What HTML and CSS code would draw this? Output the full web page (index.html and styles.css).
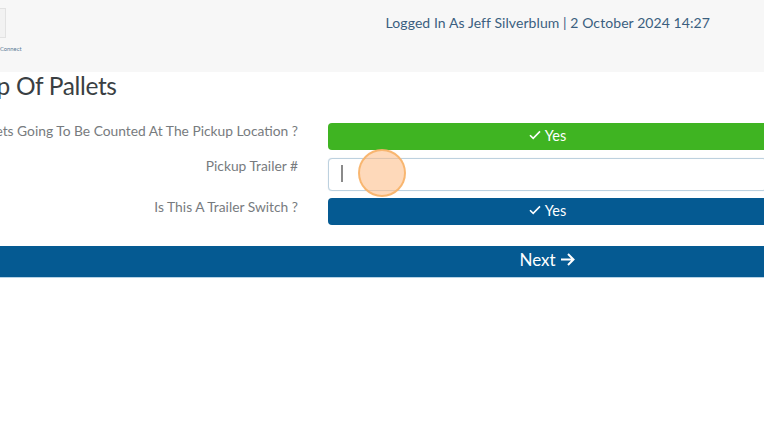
FILE: index.html
```html
<!DOCTYPE html>
<html lang="en">
<head>
    <meta charset="UTF-8">
    <meta name="viewport" content="width=device-width, initial-scale=1.0">
    <title>Pickup Of Pallets</title>
    <link rel="stylesheet" href="styles.css">
</head>
<body>
    <header class="top-bar">
        <div class="brand">
            <div class="brand-box"></div>
            <span class="brand-name">Connect</span>
        </div>
        <div class="login-info">Logged In As Jeff Silverblum | 2 October 2024 14:27</div>
    </header>

    <h1 class="page-title">Pickup Of Pallets</h1>

    <div class="form-rows">
        <div class="form-row row-counted">
            <label class="row-label">Are The Pallets Going To Be Counted At The Pickup Location ?</label>
            <button class="toggle toggle-green">
                <svg class="check" viewBox="0 0 12 10"><path d="M1 5.2 4.2 8.4 11 1.4"/></svg>
                Yes
            </button>
        </div>
        <div class="form-row row-trailer">
            <label class="row-label">Pickup Trailer #</label>
            <div class="text-input"><span class="caret"></span></div>
        </div>
        <div class="form-row row-switch">
            <label class="row-label">Is This A Trailer Switch ?</label>
            <button class="toggle toggle-blue">
                <svg class="check" viewBox="0 0 12 10"><path d="M1 5.2 4.2 8.4 11 1.4"/></svg>
                Yes
            </button>
        </div>
    </div>

    <button class="next-btn">
        Next
        <svg class="arrow" viewBox="0 0 15 13"><path d="M1 6.5H13.5M8 1l5.5 5.5L8 12"/></svg>
    </button>

    <div class="click-marker"></div>
</body>
</html>
```

FILE: styles.css
```css
* {
    padding: 0;
    margin: 0;
    box-sizing: border-box;
}

html, body {
    width: 764px;
    height: 426px;
    overflow: hidden;
}

body {
    font-family: 'Lato', 'Open Sans', sans-serif;
    background-color: #fff;
    position: relative;
}

.top-bar {
    height: 72px;
    background-color: #f7f7f7;
    display: flex;
    justify-content: space-between;
}

.brand {
    width: 24px;
    padding-top: 8px;
}

.brand-box {
    width: 6px;
    height: 30px;
    background-color: #f2f2f2;
    border: 1px solid #e2e2e2;
    border-left: none;
}

.brand-name {
    display: block;
    margin-top: 7px;
    font-size: 5.8px;
    line-height: 8px;
    color: #5a7a96;
    white-space: nowrap;
}

.login-info {
    margin: 14px 54px 0 0;
    font-size: 14px;
    line-height: 18px;
    letter-spacing: 0.08px;
    color: #3b5f80;
}

.page-title {
    margin: -1px 0 0 -60px;
    font-size: 24.5px;
    line-height: 30px;
    letter-spacing: -0.35px;
    font-weight: 400;
    color: #3a3f43;
    white-space: nowrap;
}

.form-rows {
    margin-top: 22px;
}

.form-row {
    display: flex;
    width: 767px;
}

.row-counted {
    height: 27px;
}

.row-trailer {
    height: 33px;
    margin-top: 8px;
}

.row-switch {
    height: 27px;
    margin-top: 7px;
}

.row-label {
    flex: 0 0 298px;
    min-width: 0;
    margin-right: 30px;
    display: flex;
    justify-content: flex-end;
    font-size: 13.8px;
    line-height: 16px;
    color: #777b7e;
    white-space: nowrap;
}

.row-switch .row-label {
    padding-top: 1px;
}

.toggle {
    flex: 1;
    display: flex;
    justify-content: center;
    align-items: center;
    gap: 4px;
    padding-bottom: 3px;
    border: none;
    border-radius: 4px;
    color: #fff;
    font-family: inherit;
    font-size: 14.5px;
    font-weight: 400;
}

.toggle-green {
    background-color: #3fb422;
}

.toggle-blue {
    background-color: #055a92;
}

.check {
    width: 12px;
    height: 10px;
    fill: none;
    stroke: #fff;
    stroke-width: 1.6;
}

.text-input {
    flex: 1;
    display: flex;
    align-items: center;
    padding-left: 12px;
    background-color: #fff;
    border: 1px solid #bdd1df;
    border-radius: 4px;
    box-shadow: 0 0 1px #c5d6e2;
}

.caret {
    width: 2px;
    height: 17px;
    margin-top: -2px;
    background-color: #8a8a8a;
}

.next-btn {
    display: flex;
    justify-content: center;
    align-items: center;
    gap: 4px;
    width: 1094px;
    height: 32px;
    margin-top: 21px;
    padding-bottom: 4px;
    background-color: #055a92;
    border: none;
    border-bottom: 1px solid #b6d3e6;
    color: #fff;
    font-family: inherit;
    font-size: 17px;
}

.arrow {
    width: 15px;
    height: 13px;
    fill: none;
    stroke: #fff;
    stroke-width: 2;
}

/* click highlight from the screen recording */
.click-marker {
    position: absolute;
    left: 358px;
    top: 149px;
    width: 48px;
    height: 48px;
    border-radius: 50%;
    background-color: rgba(253, 186, 130, 0.55);
    border: 2px solid rgba(247, 176, 100, 0.85);
}
```
